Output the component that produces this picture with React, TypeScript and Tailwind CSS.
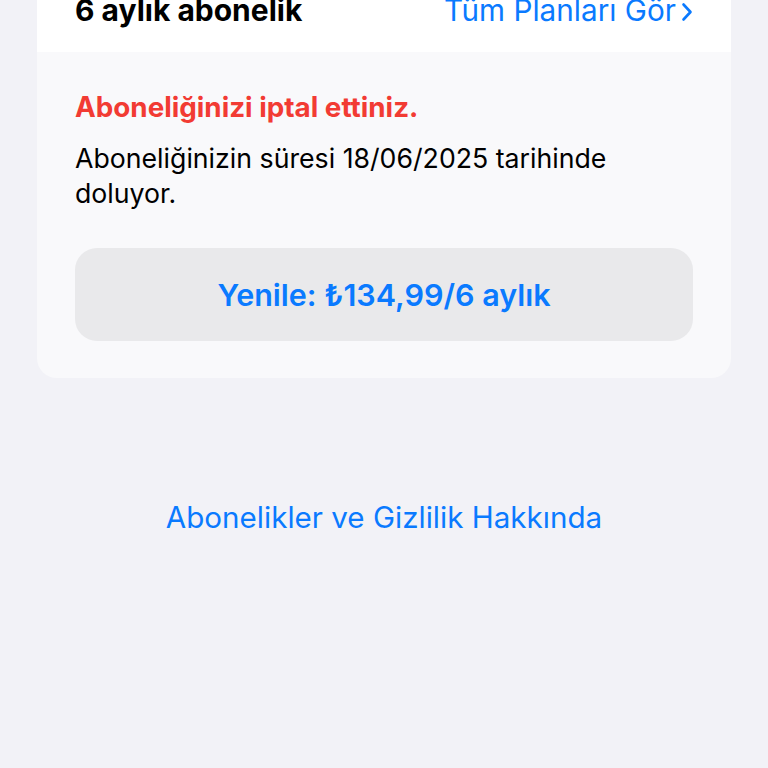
const App = () => {
  return (
    <div className="min-h-screen bg-[#f2f2f7] overflow-hidden font-['Inter',sans-serif] antialiased">
      <div className="mx-[37px] -mt-[40px] rounded-[20px] overflow-hidden bg-[#f9f9fb]">
        <div className="bg-white h-[92px] px-[38px] pb-[24px] flex items-end justify-between">
          <span className="text-[30px] leading-[36px] font-bold text-black">6 aylık abonelik</span>
          <span className="flex items-center text-[29.7px] leading-[36px] text-[#0a7aff]">
            Tüm Planları Gör
            <svg width="12" height="20" viewBox="0 0 12 20" className="ml-[5px] mt-[4px]">
              <path d="M2.5 2.5 L9.5 10 L2.5 17.5" fill="none" stroke="#0a7aff" strokeWidth="2.6" strokeLinecap="round" strokeLinejoin="round" />
            </svg>
          </span>
        </div>
        <div className="px-[38px] pt-[39px] pb-[37px]">
          <p className="text-[27.8px] leading-[33px] font-bold text-[#f23b33]">Aboneliğinizi iptal ettiniz.</p>
          <p className="mt-[17px] text-[26.7px] leading-[35px] text-black">
            Aboneliğinizin süresi 18/06/2025 tarihinde doluyor.
          </p>
          <button className="mt-[37px] w-full h-[93px] rounded-[22px] bg-[#e9e9eb] text-[30.5px] font-semibold text-[#0a7aff]">
            Yenile: ₺134,99/6 aylık
          </button>
        </div>
      </div>
      <div className="mt-[121px] text-center text-[29.6px] leading-[36px] text-[#0a7aff]">
        Abonelikler ve Gizlilik Hakkında
      </div>
    </div>
  );
};

export default App;
